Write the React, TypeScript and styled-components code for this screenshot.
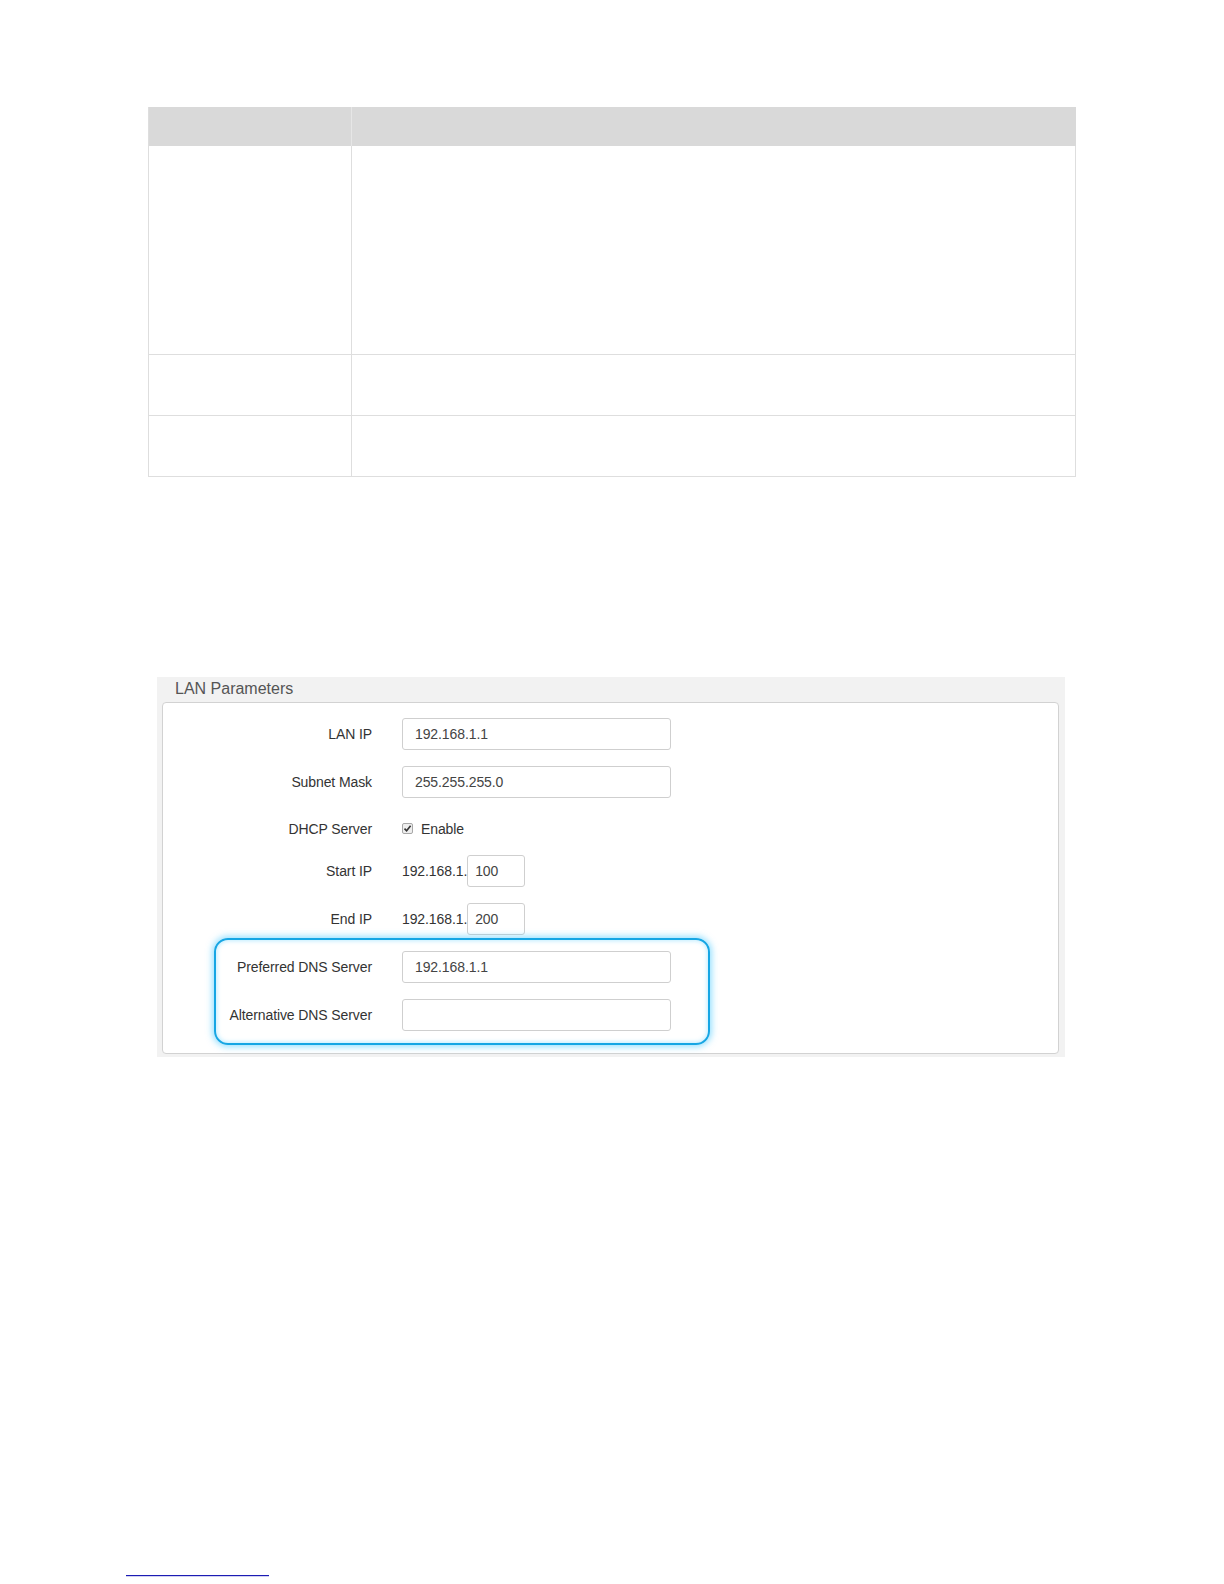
import React from "react";
import styled, { createGlobalStyle } from "styled-components";

const Global = createGlobalStyle`
  html, body { margin: 0; padding: 0; background: #ffffff; }
  body { font-family: "Liberation Sans", Arial, sans-serif; color: #333; }
  * { box-sizing: border-box; }
`;

const Page = styled.div`
  width: 1224px;
  height: 1584px;
  padding-top: 107px;
  display: flex;
  flex-direction: column;
  overflow: hidden;
`;

const TableGrid = styled.div`
  margin-left: 148px;
  width: 928px;
  display: grid;
  grid-template-columns: 203px 1fr;
  grid-template-rows: 39px 209px 61px 61px;
  border-left: 1px solid #dedede;
`;

const HeadCell = styled.div<{ $first?: boolean }>`
  background: #d9d9d9;
  border-right: 1px solid ${(p) => (p.$first ? "#e6e6e6" : "#d9d9d9")};
`;

const BodyCell = styled.div`
  background: #ffffff;
  border-right: 1px solid #dedede;
  border-bottom: 1px solid #dedede;
`;

const Panel = styled.section`
  margin-top: 200px;
  margin-left: 157px;
  width: 908px;
  background: #f2f2f2;
  padding: 0 6px 3px 5px;
`;

const PanelTitle = styled.div`
  height: 25px;
  line-height: 23px;
  padding-left: 13px;
  font-size: 16px;
  color: #555;
`;

const PanelBody = styled.div`
  background: #ffffff;
  border: 1px solid #d2d2d2;
  border-radius: 4px;
  padding: 15px 0 22px;
  display: flex;
  flex-direction: column;
`;

const Row = styled.div<{ $h?: number; $mt?: number }>`
  display: flex;
  align-items: center;
  height: ${(p) => p.$h ?? 32}px;
  margin-top: ${(p) => p.$mt ?? 16}px;
  &:first-child { margin-top: 0; }
`;

const Label = styled.div`
  width: 209px;
  text-align: right;
  font-size: 14px;
  letter-spacing: -0.1px;
  color: #333;
  flex-shrink: 0;
`;

const Field = styled.div`
  margin-left: 30px;
  display: flex;
  align-items: center;
  font-size: 14px;
  letter-spacing: -0.1px;
  color: #333;
`;

const TextBox = styled.div<{ $small?: boolean }>`
  width: ${(p) => (p.$small ? 58 : 269)}px;
  height: 32px;
  border: 1px solid #cfcfcf;
  border-radius: 3px;
  background: #fff;
  display: flex;
  align-items: center;
  padding-left: ${(p) => (p.$small ? 7 : 12)}px;
  font-size: 14px;
  letter-spacing: -0.1px;
  color: #444;
`;

const CheckBox = styled.span`
  width: 11px;
  height: 11px;
  border: 1px solid #a8a8a8;
  border-radius: 2px;
  background: #eeeeee;
  display: inline-flex;
  align-items: center;
  justify-content: center;
  margin-right: 8px;
`;

const Highlight = styled.div`
  position: relative;
  margin-top: 16px;
  display: flex;
  flex-direction: column;
  &::before {
    content: "";
    position: absolute;
    left: 51px;
    width: 492px;
    top: -13px;
    bottom: -14px;
    border: 2px solid #16a6e4;
    border-radius: 14px;
    box-shadow: 0 0 6px 2px rgba(70, 200, 255, 0.55),
      inset 0 0 4px 1px rgba(70, 200, 255, 0.35);
    pointer-events: none;
  }
`;

const FooterRule = styled.div`
  margin-top: 518px;
  margin-left: 126px;
  width: 143px;
  height: 1px;
  background: #1c1cb4;
  box-shadow: 0 0.5px 0 rgba(28, 28, 180, 0.4);
`;

export default function App() {
  return (
    <>
      <Global />
      <Page>
        <TableGrid>
          <HeadCell $first />
          <HeadCell />
          <BodyCell />
          <BodyCell />
          <BodyCell />
          <BodyCell />
          <BodyCell />
          <BodyCell />
        </TableGrid>

        <Panel>
          <PanelTitle>LAN Parameters</PanelTitle>
          <PanelBody>
            <Row>
              <Label>LAN IP</Label>
              <Field>
                <TextBox>192.168.1.1</TextBox>
              </Field>
            </Row>
            <Row>
              <Label>Subnet Mask</Label>
              <Field>
                <TextBox>255.255.255.0</TextBox>
              </Field>
            </Row>
            <Row $h={29}>
              <Label>DHCP Server</Label>
              <Field>
                <CheckBox>
                  <svg width="9" height="9" viewBox="0 0 9 9">
                    <path d="M1.5 4.6 L3.6 6.8 L7.6 1.8" fill="none" stroke="#333" strokeWidth="1.6" />
                  </svg>
                </CheckBox>
                Enable
              </Field>
            </Row>
            <Row $mt={12}>
              <Label>Start IP</Label>
              <Field>
                192.168.1.
                <TextBox $small>100</TextBox>
              </Field>
            </Row>
            <Row>
              <Label>End IP</Label>
              <Field>
                192.168.1.
                <TextBox $small>200</TextBox>
              </Field>
            </Row>
            <Highlight>
              <Row>
                <Label>Preferred DNS Server</Label>
                <Field>
                  <TextBox>192.168.1.1</TextBox>
                </Field>
              </Row>
              <Row>
                <Label>Alternative DNS Server</Label>
                <Field>
                  <TextBox />
                </Field>
              </Row>
            </Highlight>
          </PanelBody>
        </Panel>

        <FooterRule />
      </Page>
    </>
  );
}
